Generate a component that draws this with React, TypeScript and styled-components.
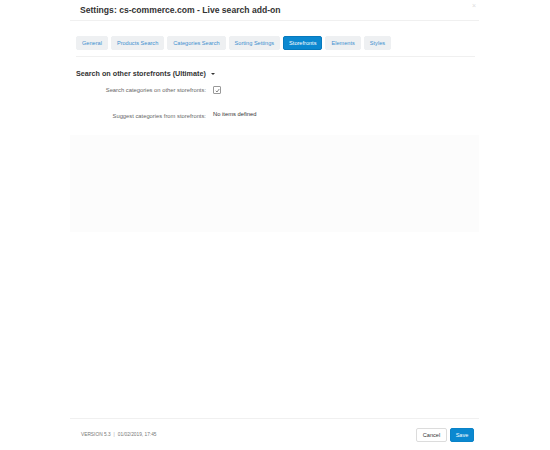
import React from "react";
import styled, { createGlobalStyle } from "styled-components";

const Global = createGlobalStyle`
  html, body { margin: 0; padding: 0; background: #fff; }
  body { font-family: "Liberation Sans", Arial, sans-serif; }
`;

const Dialog = styled.div`
  position: relative;
  width: 409px;
  height: 450px;
  margin-left: 70px;
  display: flex;
  flex-direction: column;
`;

const Header = styled.div`
  height: 21px;
  box-sizing: border-box;
  border-bottom: 1px solid #f0f0f0;
  padding-left: 10px;
  display: flex;
  align-items: center;
`;

const Title = styled.h1`
  margin: 0;
  font-size: 8.6px;
  font-weight: bold;
  color: #333;
`;

const Close = styled.span`
  position: absolute;
  top: 2px;
  right: 3px;
  font-size: 7px;
  color: #ddd;
`;

const Body = styled.div`
  padding: 15px 4px 0 6px;
  flex: 1;
`;

const Tabs = styled.div`
  display: flex;
  gap: 3px;
  padding-bottom: 6px;
  border-bottom: 1px solid #f0f0f0;
`;

const Tab = styled.div<{ $active?: boolean }>`
  height: 14px;
  box-sizing: border-box;
  padding: 0 5px;
  display: flex;
  align-items: center;
  font-size: 5.6px;
  border-radius: 2px;
  border: 1px solid ${(p) => (p.$active ? "#0679bd" : "#eef0f2")};
  background: ${(p) => (p.$active ? "#0b88d0" : "#eef0f2")};
  color: ${(p) => (p.$active ? "#fff" : "#3d8fcf")};
`;

const SectionTitle = styled.h2`
  margin: 12px 0 0 0;
  font-size: 7.2px;
  font-weight: bold;
  color: #333;
  display: flex;
  align-items: center;
  gap: 5px;
`;

const Caret = styled.span`
  width: 0;
  height: 0;
  border-left: 2px solid transparent;
  border-right: 2px solid transparent;
  border-top: 2px solid #333;
`;

const Form = styled.div`
  display: grid;
  grid-template-columns: 130px 1fr;
  column-gap: 7px;
  row-gap: 17px;
  margin-top: 8px;
`;

const Label = styled.div<{ $offset?: number }>`
  text-align: right;
  font-size: 5.8px;
  color: #666;
  padding-top: ${(p) => p.$offset ?? 0}px;
`;

const Value = styled.div`
  font-size: 5.8px;
  color: #333;
`;

const Check = styled.div`
  width: 6px;
  height: 6px;
  border: 1px solid #999;
  border-radius: 1px;
  display: flex;
  align-items: center;
  justify-content: center;
`;

const Panel = styled.div`
  margin: 16px 0 0 -6px;
  width: 409px;
  height: 97px;
  background: #fcfcfc;
`;

const Footer = styled.div`
  height: 32px;
  border-top: 1px solid #f0f0f0;
  display: flex;
  align-items: center;
  padding: 0 5px 0 11px;
  box-sizing: border-box;
`;

const Version = styled.div`
  flex: 1;
  font-size: 4.8px;
  color: #777;
  text-transform: uppercase;
`;

const Sep = styled.span`
  margin: 0 3px;
  color: #aaa;
`;

const Button = styled.button<{ $primary?: boolean }>`
  height: 14px;
  width: ${(p) => (p.$primary ? 24 : 31)}px;
  padding: 0;
  margin-left: 3px;
  font-family: "Liberation Sans", Arial, sans-serif;
  font-size: 5.6px;
  border-radius: 2px;
  border: 1px solid ${(p) => (p.$primary ? "#0a83c8" : "#dcdcdc")};
  background: ${(p) => (p.$primary ? "#0b88d0" : "#fff")};
  color: ${(p) => (p.$primary ? "#fff" : "#333")};
`;

const tabs = [
  "General",
  "Products Search",
  "Categories Search",
  "Sorting Settings",
  "Storefronts",
  "Elements",
  "Styles",
];

export default function App() {
  return (
    <>
      <Global />
      <Dialog>
        <Header>
          <Title>Settings: cs-commerce.com - Live search add-on</Title>
        </Header>
        <Close>×</Close>
        <Body>
          <Tabs>
            {tabs.map((t) => (
              <Tab key={t} $active={t === "Storefronts"}>
                {t}
              </Tab>
            ))}
          </Tabs>
          <SectionTitle>
            Search on other storefronts (Ultimate) <Caret />
          </SectionTitle>
          <Form>
            <Label $offset={1}>Search categories on other storefronts:</Label>
            <div>
              <Check>
                <svg width="5" height="5" viewBox="0 0 10 10">
                  <path d="M1.5 5.5 L4 8 L8.5 2" fill="none" stroke="#555" strokeWidth="1.4" />
                </svg>
              </Check>
            </div>
            <Label $offset={2}>Suggest categories from storefronts:</Label>
            <Value>No items defined</Value>
          </Form>
          <Panel />
        </Body>
        <Footer>
          <Version>
            Version 5.3<Sep>|</Sep>01/02/2019, 17:45
          </Version>
          <Button>Cancel</Button>
          <Button $primary>Save</Button>
        </Footer>
      </Dialog>
    </>
  );
}
